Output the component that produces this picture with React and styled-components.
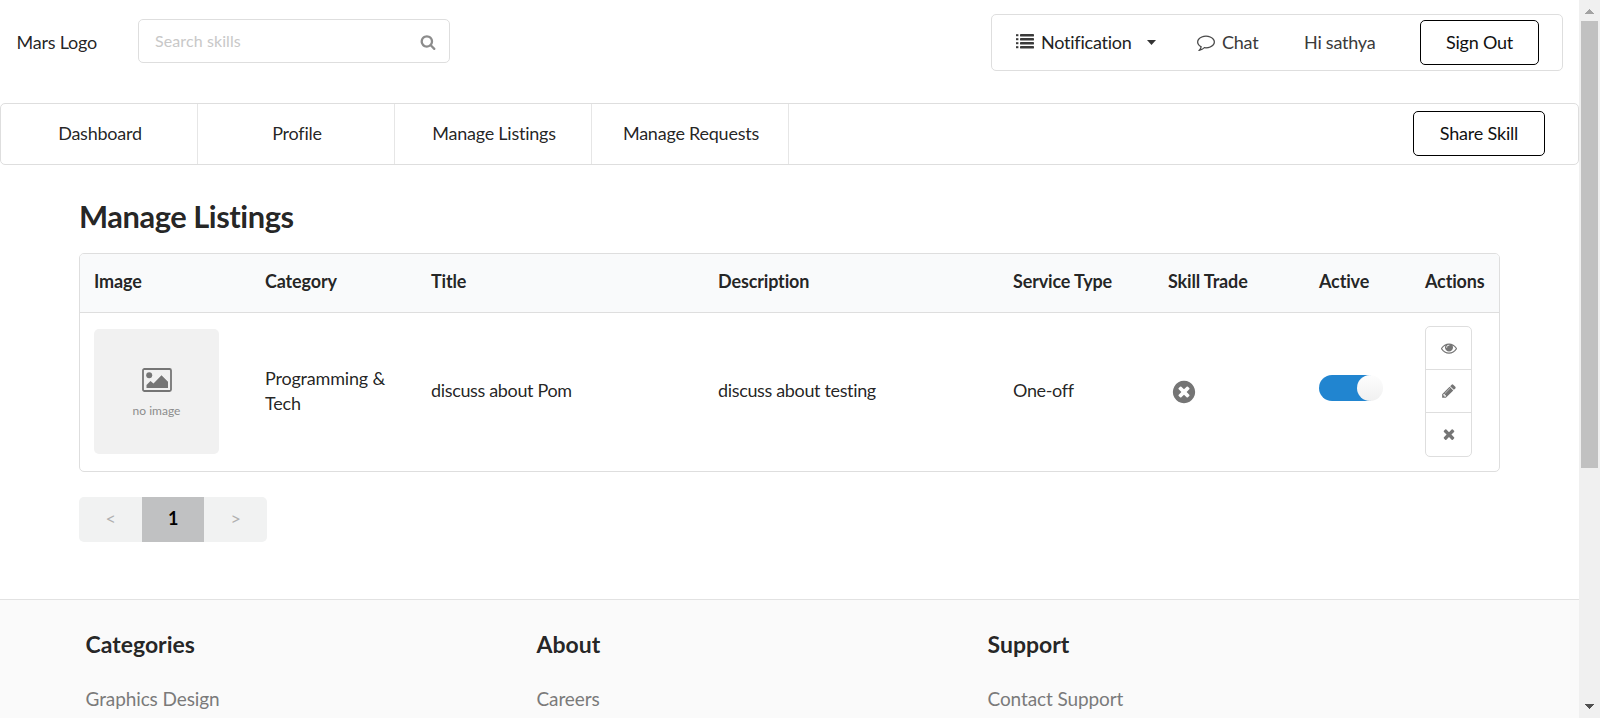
import React from "react";
import styled, { createGlobalStyle } from "styled-components";

const Global = createGlobalStyle`
  *, *::before, *::after { box-sizing: border-box; }
  html, body { margin: 0; padding: 0; }
  body {
    height: 718px;
    overflow: hidden;
    background: #fff;
    color: rgba(0, 0, 0, 0.87);
    font-family: Lato, "Liberation Sans", sans-serif;
    font-size: 18px;
    line-height: 25px;
    letter-spacing: -0.23px;
  }
`;

const line = "#dedede";

const Shell = styled.div`
  display: flex;
  height: 718px;
  overflow: hidden;
`;

const Page = styled.div`
  display: flex;
  flex-direction: column;
  width: 1579px;
  flex: none;
`;

const Header = styled.header`
  display: flex;
  align-items: flex-start;
  height: 103px;
  padding: 14px 16px 0;
`;

const Logo = styled.div`
  width: 122px;
  padding: 16px 0 0 0.5px;
`;

const SearchBox = styled.label`
  display: flex;
  align-items: center;
  width: 312px;
  height: 44px;
  margin-top: 5px;
  padding: 1px 13px 0 16px;
  border: 1px solid ${line};
  border-radius: 5px;
`;

const SearchInput = styled.input`
  flex: 1;
  min-width: 0;
  padding: 0 0 3px;
  border: 0;
  outline: 0;
  background: transparent;
  font: 16px Lato, "Liberation Sans", sans-serif;
  letter-spacing: 0.1px;
  &::placeholder { color: #c8c8c8; opacity: 1; }
`;

const UserMenu = styled.nav`
  display: flex;
  width: 572px;
  height: 57px;
  margin-left: auto;
  padding: 5px 23px 0 24px;
  border: 1px solid ${line};
  border-radius: 5px;
`;

const MenuItem = styled.a`
  display: flex;
  align-items: center;
  gap: ${(p) => p.$gap || 0}px;
  width: ${(p) => p.$width}px;
  height: 45px;
  color: ${(p) => p.$color || "#222"};
  white-space: nowrap;
`;

const OutlineButton = styled.button`
  width: ${(p) => p.$width}px;
  height: 45px;
  padding: 0 0 2px;
  border: 1px solid #000;
  border-radius: 5px;
  background: #fff;
  color: #111;
  font: 18px Lato, "Liberation Sans", sans-serif;
  letter-spacing: -0.2px;
`;

const NavBar = styled.nav`
  display: flex;
  align-items: stretch;
  height: 62px;
  border: 1px solid ${line};
  border-radius: 5px;
`;

const NavTab = styled.a`
  display: flex;
  align-items: center;
  justify-content: center;
  width: 197px;
  padding: 0 0 1px 2px;
  border-right: 1px solid #e6e6e6;
`;

const NavEnd = styled.div`
  margin: 7px 33px 0 auto;
`;

const Main = styled.main`
  height: 434px;
  padding: 32px 79px 0;
`;

const Title = styled.h2`
  margin: 0 0 16px;
  font-size: 30.85px;
  line-height: 40px;
  font-weight: 700;
  letter-spacing: -0.45px;
`;

const TableFrame = styled.div`
  height: 219px;
  border: 1px solid ${line};
  border-radius: 5px;
  overflow: hidden;
`;

const Table = styled.table`
  width: 1419px;
  table-layout: fixed;
  border-collapse: separate;
  border-spacing: 0;
`;

const Col = styled.col`
  width: ${(p) => p.$width}px;
`;

const Th = styled.th`
  height: 59px;
  padding: 0 0 4px 14px;
  border-bottom: 1px solid ${line};
  background: #f9fafb;
  text-align: left;
  font-weight: 700;
  letter-spacing: -0.15px;
  white-space: nowrap;
`;

const Td = styled.td`
  height: 156px;
  padding: 0 14px ${(p) => (p.$raised ? 2 : 0)}px;
  vertical-align: middle;
  letter-spacing: ${(p) => (p.$raised ? -0.35 : -0.18)}px;
`;

const Thumb = styled.div`
  display: flex;
  flex-direction: column;
  align-items: center;
  width: 125px;
  height: 125px;
  padding-top: 39px;
  border-radius: 5px;
  background: #f1f1f1;
`;

const ThumbCaption = styled.span`
  margin-top: 10px;
  color: #8c8c8c;
  font-size: 12px;
  line-height: 18px;
  letter-spacing: 0;
`;

const IconInset = styled.div`
  display: flex;
  padding: 1px 0 0 2.5px;
`;

const Toggle = styled.div`
  display: flex;
  justify-content: flex-end;
  width: 64px;
  height: 26px;
  margin-top: -6px;
  border-radius: 13px;
  background: linear-gradient(90deg, #2185d0 52px, transparent 52px);
`;

const Knob = styled.span`
  width: 26px;
  height: 26px;
  border-radius: 50%;
  background: linear-gradient(#fdfdfd, #f0f0f0);
`;

const ActionGroup = styled.div`
  display: flex;
  flex-direction: column;
  width: 47px;
  height: 131px;
  border: 1px solid ${line};
  border-radius: 5px;
`;

const ActionButton = styled.button`
  display: flex;
  align-items: center;
  justify-content: center;
  flex: 1;
  padding: 0;
  border: 0;
  background: none;
  & + & { border-top: 1px solid ${line}; }
`;

const Pager = styled.div`
  display: flex;
  width: 188px;
  height: 45px;
  margin-top: 25px;
  border-radius: 5px;
  overflow: hidden;
  background: #f1f2f2;
`;

const PageCell = styled.span`
  display: flex;
  align-items: center;
  justify-content: center;
  width: ${(p) => (p.$active ? 62 : 63)}px;
  padding-bottom: ${(p) => (p.$active ? 2 : 3)}px;
  background: ${(p) => (p.$active ? "#c0c1c2" : "transparent")};
  color: ${(p) => (p.$active ? "#000" : "#b0b0b0")};
  font-size: 18px;
  font-weight: ${(p) => (p.$active ? 700 : 400)};
`;

const Footer = styled.footer`
  display: flex;
  flex: 1;
  padding: 29px 0 0 85.5px;
  border-top: 1px solid #e2e2e2;
  background: #fafafa;
`;

const FooterColumn = styled.section`
  width: 451px;
`;

const FooterTitle = styled.h3`
  margin: 0 0 26px;
  font-size: 23px;
  line-height: 30px;
  font-weight: 700;
  letter-spacing: 0;
`;

const FooterLink = styled.a`
  display: block;
  color: #7a7a7a;
  font-size: 19px;
  line-height: 28px;
  letter-spacing: -0.1px;
`;

const ScrollTrack = styled.div`
  display: flex;
  flex-direction: column;
  align-items: center;
  justify-content: space-between;
  width: 21px;
  padding: 9px 0;
  background: #f0f0f0;
`;

const ScrollThumb = styled.div`
  width: 17px;
  height: 447px;
  margin: 7px 0 auto;
  background: #c1c1c1;
`;

const PATHS = {
  search:
    "M1216 832q0-185-131.5-316.5t-316.5-131.5-316.5 131.5-131.5 316.5 131.5 316.5 316.5 131.5 316.5-131.5 131.5-316.5zm512 832q0 52-38 90t-90 38q-54 0-90-38l-343-342q-179 124-399 124-143 0-273.5-55.5t-225-150-150-225-55.5-273.5 55.5-273.5 150-225 225-150 273.5-55.5 273.5 55.5 225 150 150 225 55.5 273.5q0 220-124 399l343 343q37 37 37 90z",
  comment:
    "M896 384q-204 0-381.5 69.5t-282 187.5-104.5 255q0 112 71.5 213.5t201.5 175.5l87 50-27 96q-24 91-70 172 152-63 275-171l43-38 57 6q69 8 130 8 204 0 381.5-69.5t282-187.5 104.5-255-104.5-255-282-187.5-381.5-69.5zm896 512q0 174-120 321.5t-326 233-450 85.5q-70 0-145-8-198 175-460 242-49 14-114 22h-5q-15 0-27-10.5t-16-27.5v-1q-3-4-.5-12t2-10 4.5-9.5l6-9 7-8.5 8-9q7-8 31-34.5t34.5-38 31-39.5 32.5-51 27-59 26-76q-157-89-247.5-220t-90.5-281q0-174 120-321.5t326-233 450-85.5 450 85.5 326 233 120 321.5z",
  eye:
    "M1664 960q-152-236-381-353 61 104 61 225 0 185-131.5 316.5t-316.5 131.5-316.5-131.5-131.5-316.5q0-121 61-225-229 117-381 353 133 205 333.5 326.5t434.5 121.5 434.5-121.5 333.5-326.5zm-720-384q0-20-14-34t-34-14q-125 0-214.5 89.5t-89.5 214.5q0 20 14 34t34 14 34-14 14-34q0-86 61-147t147-61q20 0 34-14t14-34zm848 384q0 34-20 69-140 230-376.5 368.5t-499.5 138.5-499.5-139-376.5-368q-20-35-20-69t20-69q140-229 376.5-368t499.5-139 499.5 139 376.5 368q20 35 20 69z",
  pencil:
    "M491 1536l91-91-235-235-91 91v107h128v128h107zm523-928q0-22-22-22-10 0-17 7l-542 542q-7 7-7 17 0 22 22 22 10 0 17-7l542-542q7-7 7-17zm-54-192l416 416-832 832h-416v-416zm683 96q0 53-37 90l-166 166-416-416 166-165q36-38 90-38 53 0 91 38l235 234q37 39 37 91z",
  remove:
    "M1490 1322q0 40-28 68l-136 136q-28 28-68 28t-68-28l-294-294-294 294q-28 28-68 28t-68-28l-136-136q-28-28-28-68t28-68l294-294-294-294q-28-28-28-68t28-68l136-136q28-28 68-28t68 28l294 294 294-294q28-28 68-28t68 28l136 136q28 28 28 68t-28 68l-294 294 294 294q28 28 28 68z",
  removeCircle:
    "M1277 1122q0-26-19-45l-181-181 181-181q19-19 19-45 0-27-19-46l-90-90q-19-19-46-19-26 0-45 19l-181 181-181-181q-19-19-45-19-27 0-46 19l-90 90q-19 19-19 46 0 26 19 45l181 181-181 181q-19 19-19 45 0 27 19 46l90 90q19 19 46 19 26 0 45-19l181-181 181 181q19 19 45 19 27 0 46-19l90-90q19-19 19-46zm387-226q0 209-103 385.5t-279.5 279.5-385.5 103-385.5-103-279.5-279.5-103-385.5 103-385.5 279.5-279.5 385.5-103 385.5 103 279.5 279.5 103 385.5z",
};

const Svg = styled.svg`
  display: block;
  flex: none;
`;

const Icon = ({ name, size, color = "#757575" }) => (
  <Svg width={size} height={size} viewBox="0 0 1792 1792" fill={color}>
    <path d={PATHS[name]} />
  </Svg>
);

const ListSvg = styled(Svg)`
  margin-bottom: 2px;
`;

const ListIcon = () => (
  <ListSvg width="18" height="18" viewBox="0 0 18 18" fill="#3a3a3a">
    {[1, 5, 9, 13].map((y) => (
      <g key={y}>
        <rect x="0" y={y + 0.2} width="2.4" height="2" />
        <rect x="4" y={y} width="14" height="2.4" rx="0.4" />
      </g>
    ))}
  </ListSvg>
);

const CaretSvg = styled(Svg)`
  margin-left: 8px;
`;

const Lifted = styled.span`
  padding-bottom: 2px;
`;

const Arrow = ({ up, color }) => (
  <Svg width="9" height="5" viewBox="0 0 9 5" fill={color} shapeRendering="crispEdges">
    <path d={up ? "M0 5L4.5 0L9 5z" : "M0 0H9L4.5 5z"} />
  </Svg>
);

const PictureIcon = () => (
  <Svg width="30" height="24" viewBox="0 0 30 24">
    <rect x="1" y="1" width="28" height="22" rx="1.5" fill="none" stroke="#757575" strokeWidth="1.8" />
    <circle cx="7.2" cy="7.3" r="3" fill="#757575" />
    <path d="M4.5 20v-3l4-4 3 2.600 8-8.300 6.500 6.500v6.200z" fill="#757575" />
  </Svg>
);

const columns = [
  ["Image", 171],
  ["Category", 166],
  ["Title", 287],
  ["Description", 295],
  ["Service Type", 155],
  ["Skill Trade", 151],
  ["Active", 106],
  ["Actions", 88],
];

const tabs = ["Dashboard", "Profile", "Manage Listings", "Manage Requests"];

const footerGroups = [
  ["Categories", "Graphics Design"],
  ["About", "Careers"],
  ["Support", "Contact Support"],
];

export default function App() {
  return (
    <Shell>
      <Global />
      <Page>
        <Header>
          <Logo>Mars Logo</Logo>
          <SearchBox>
            <SearchInput placeholder="Search skills" />
            <Icon name="search" size={16} color="#8c8c8c" />
          </SearchBox>
          <UserMenu>
            <MenuItem $width={181} $gap={7}>
              <ListIcon />
              Notification
              <CaretSvg width="9" height="5" viewBox="0 0 9 5" fill="#333">
                <path d="M0 0H9L4.500 5z" />
              </CaretSvg>
            </MenuItem>
            <MenuItem $width={107} $gap={7} $color="#3a3a3a">
              <Lifted>
                <Icon name="comment" size={18} color="#4a4a4a" />
              </Lifted>
              Chat
            </MenuItem>
            <MenuItem $width={116} $color="#3a3a3a">Hi sathya</MenuItem>
            <OutlineButton $width={119}>Sign Out</OutlineButton>
          </UserMenu>
        </Header>

        <NavBar>
          {tabs.map((t) => (
            <NavTab key={t}>{t}</NavTab>
          ))}
          <NavEnd>
            <OutlineButton $width={132}>Share Skill</OutlineButton>
          </NavEnd>
        </NavBar>

        <Main>
          <Title>Manage Listings</Title>
          <TableFrame>
            <Table>
              <colgroup>
                {columns.map(([name, width]) => (
                  <Col key={name} $width={width} />
                ))}
              </colgroup>
              <thead>
                <tr>
                  {columns.map(([name]) => (
                    <Th key={name}>{name}</Th>
                  ))}
                </tr>
              </thead>
              <tbody>
                <tr>
                  <Td>
                    <Thumb>
                      <PictureIcon />
                      <ThumbCaption>no image</ThumbCaption>
                    </Thumb>
                  </Td>
                  <Td>Programming &amp; Tech</Td>
                  <Td $raised>discuss about Pom</Td>
                  <Td $raised>discuss about testing</Td>
                  <Td $raised>One-off</Td>
                  <Td>
                    <IconInset>
                      <Icon name="removeCircle" size={26} />
                    </IconInset>
                  </Td>
                  <Td>
                    <Toggle>
                      <Knob />
                    </Toggle>
                  </Td>
                  <Td>
                    <ActionGroup>
                      {["eye", "pencil", "remove"].map((name) => (
                        <ActionButton key={name} aria-label={name}>
                          <Icon name={name} size={16} />
                        </ActionButton>
                      ))}
                    </ActionGroup>
                  </Td>
                </tr>
              </tbody>
            </Table>
          </TableFrame>
          <Pager>
            <PageCell>&lt;</PageCell>
            <PageCell $active>1</PageCell>
            <PageCell>&gt;</PageCell>
          </Pager>
        </Main>

        <Footer>
          {footerGroups.map(([heading, link]) => (
            <FooterColumn key={heading}>
              <FooterTitle>{heading}</FooterTitle>
              <FooterLink>{link}</FooterLink>
            </FooterColumn>
          ))}
        </Footer>
      </Page>
      <ScrollTrack>
        <Arrow up color="#a3a3a3" />
        <ScrollThumb />
        <Arrow color="#505050" />
      </ScrollTrack>
    </Shell>
  );
}
